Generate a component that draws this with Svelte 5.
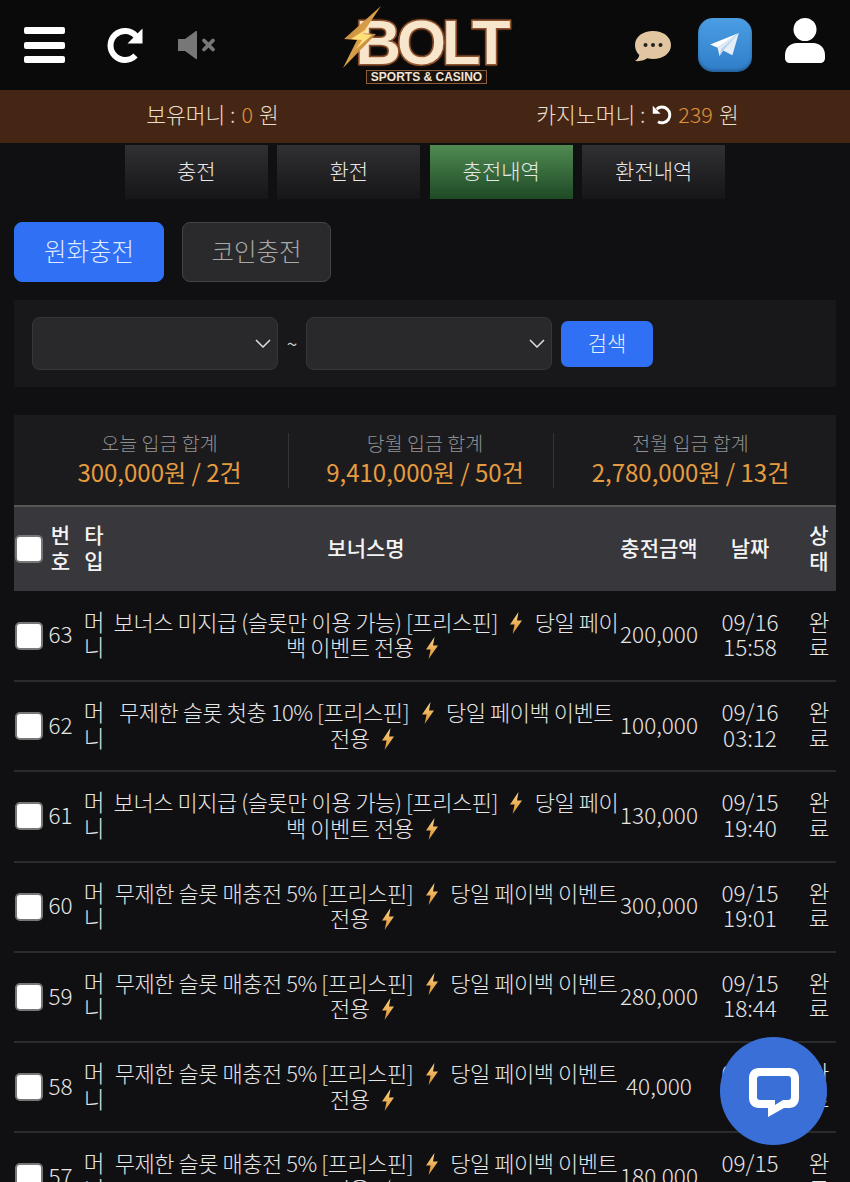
<script lang="ts">
	const tabs = [
		{ label: '충전', active: false },
		{ label: '환전', active: false },
		{ label: '충전내역', active: true },
		{ label: '환전내역', active: false }
	];

	const totals = [
		{ label: '오늘 입금 합계', value: '300,000원 / 2건' },
		{ label: '당월 입금 합계', value: '9,410,000원 / 50건' },
		{ label: '전월 입금 합계', value: '2,780,000원 / 13건' }
	];

	const missing = '보너스 미지급 (슬롯만 이용 가능)';
	const first = '무제한 슬롯 첫충 10%';
	const reload = '무제한 슬롯 매충전 5%';

	const rows = [
		{ no: 63, title: missing, amount: '200,000', day: '09/16', time: '15:58' },
		{ no: 62, title: first, amount: '100,000', day: '09/16', time: '03:12' },
		{ no: 61, title: missing, amount: '130,000', day: '09/15', time: '19:40' },
		{ no: 60, title: reload, amount: '300,000', day: '09/15', time: '19:01' },
		{ no: 59, title: reload, amount: '280,000', day: '09/15', time: '18:44' },
		{ no: 58, title: reload, amount: '40,000', day: '09/15', time: '18:20' },
		{ no: 57, title: reload, amount: '180,000', day: '09/15', time: '08:01' }
	];
</script>

{#snippet bolt()}
	<svg class="bolt" viewBox="0 0 14 22" aria-hidden="true">
		<defs>
			<linearGradient id="bolt-fill" x1="0" y1="0" x2="0" y2="1">
				<stop offset="0" stop-color="#ffd98a" />
				<stop offset="1" stop-color="#d98a2b" />
			</linearGradient>
		</defs>
		<path d="M9.5 0 1 12.5h4.6L3.6 22 13 8.6H8z" fill="url(#bolt-fill)" />
	</svg>
{/snippet}

{#snippet chevron()}
	<svg class="chevron" viewBox="0 0 16 9" aria-hidden="true">
		<path d="m1 1 7 7 7-7" fill="none" stroke="#ddd" stroke-width="1.5" />
	</svg>
{/snippet}

<div class="page">
	<header class="topbar">
		<div class="top-left">
			<button class="icon-btn burger" aria-label="메뉴">
				<span></span><span></span><span></span>
			</button>
			<svg class="refresh" viewBox="0 0 36 36" aria-label="새로고침">
				<path d="M28.5 28.5A14.5 14.5 0 1 1 29 9" fill="none" stroke="#fff" stroke-width="6" />
				<path d="M35.5 1.500v15H20.5z" fill="#fff" />
			</svg>
			<svg class="mute" viewBox="0 0 38 28" aria-label="음소거">
				<path d="M0 8h7l11-8h1v28h-1L7 20H0z" fill="#777" />
				<path d="m26 9.5 9 9m0-9-9 9" stroke="#777" stroke-width="3.8" stroke-linecap="round" />
			</svg>
		</div>

		<div class="logo">
			<svg class="logo-bolt" viewBox="0 0 40 64" aria-hidden="true">
				<defs>
					<linearGradient id="logo-gold" x1="0" y1="0" x2="1" y2="1">
						<stop offset="0" stop-color="#b87a35" />
						<stop offset="0.5" stop-color="#d9a04a" />
						<stop offset="1" stop-color="#8a4f1e" />
					</linearGradient>
				</defs>
				<path d="M38 0 20 27l13 1L0 62l14-28L1 33z" fill="url(#logo-gold)" />
				<path d="M28 20 8 33l11 1-6 9 16-14-9-1z" fill="#ffdf78" />
			</svg>
			<div class="logo-word">BOLT</div>
			<div class="logo-sub">SPORTS &amp; CASINO</div>
		</div>

		<div class="top-right">
			<svg class="chat" viewBox="0 0 36 32" aria-label="채팅">
				<path d="M18 1c10 0 18 5.600 18 14S28 29 18 29c-2 0-4-.2-5.700-.7C10 30 6 31.600 0 31c2.500-1.500 4-3.700 4.300-6C1.500 22.500 0 19 0 15 0 6.600 8 1 18 1z" fill="#e2c5a1" />
				<circle cx="10.500" cy="15" r="2" fill="#222" />
				<circle cx="18" cy="15" r="2" fill="#222" />
				<circle cx="25.500" cy="15" r="2" fill="#222" />
			</svg>
			<div class="telegram">
				<svg viewBox="0 0 32 26" aria-label="텔레그램">
					<path d="M31 0 0 12.500l8 3.500L31 0z" fill="#fff" />
					<path d="M31 0 8 16l2 9 4-6 10 5z" fill="#e4eef8" />
					<path d="M10 25 12 17 31 0 14 19z" fill="#b9d2ea" />
				</svg>
			</div>
			<svg class="user" viewBox="0 0 40 45" aria-label="내 정보">
				<circle cx="20" cy="11.500" r="11.500" fill="#fff" />
				<path d="M0 37c0-7 5-12 12-12h16c7 0 12 5 12 12v3c0 3-2 5-5 5H5c-3 0-5-2-5-5z" fill="#fff" />
			</svg>
		</div>
	</header>

	<div class="balance">
		<div class="balance-item">보유머니 : <b>0</b> 원</div>
		<div class="balance-item">
			카지노머니 :
			<svg class="undo" viewBox="0 0 24 24" aria-hidden="true">
				<path d="M6.500 5.800A9 9 0 1 1 8 20.300" fill="none" stroke="#fff" stroke-width="3.400" />
				<path d="M2 2v9h9z" fill="#fff" />
			</svg>
			<b>239</b> 원
		</div>
	</div>

	<nav class="tabs">
		{#each tabs as tab}
			<a class="tab" class:active={tab.active} href="#top">{tab.label}</a>
		{/each}
	</nav>

	<div class="kinds">
		<button class="kind on">원화충전</button>
		<button class="kind">코인충전</button>
	</div>

	<form class="filter" onsubmit={(e) => e.preventDefault()}>
		<div class="select"><select aria-label="시작일"></select>{@render chevron()}</div>
		<span class="tilde">~</span>
		<div class="select"><select aria-label="종료일"></select>{@render chevron()}</div>
		<button class="search">검색</button>
	</form>

	<section class="totals">
		{#each totals as total}
			<div class="total">
				<div class="total-label">{total.label}</div>
				<div class="total-value">{total.value}</div>
			</div>
		{/each}
	</section>

	<table class="history">
		<colgroup>
			<col class="c-check" />
			<col class="c-no" />
			<col class="c-type" />
			<col class="c-name" />
			<col class="c-amount" />
			<col class="c-date" />
			<col class="c-state" />
		</colgroup>
		<thead>
			<tr>
				<th><input type="checkbox" aria-label="전체 선택" /></th>
				<th>번호</th>
				<th>타입</th>
				<th>보너스명</th>
				<th>충전금액</th>
				<th>날짜</th>
				<th>상태</th>
			</tr>
		</thead>
		<tbody>
			{#each rows as row}
				<tr>
					<td><input type="checkbox" aria-label="선택" /></td>
					<td>{row.no}</td>
					<td>머니</td>
					<td class="name">{row.title} [프리스핀] {@render bolt()} 당일 페이백 이벤트 전용 {@render bolt()}</td>
					<td>{row.amount}</td>
					<td>{row.day}<br />{row.time}</td>
					<td>완료</td>
				</tr>
			{/each}
		</tbody>
	</table>

	<button class="livechat" aria-label="상담">
		<svg viewBox="0 0 52 52" aria-hidden="true">
			<path
				fill-rule="evenodd"
				d="M11 1h30c6 0 10 4 10 10v20c0 6-4 10-10 10H36L20 50v-9h-9C5 41 1 37 1 31V11C1 5 5 1 11 1zm1 8c-2 0-3 1-3 3v18c0 2 1 3 3 3h15v5l8-5h5c2 0 3-1 3-3V12c0-2-1-3-3-3z"
				fill="#fff"
			/>
		</svg>
	</button>
</div>

<style>
	:global(body) {
		background: #101013;
	}

	.page {
		position: relative;
		width: 850px;
		height: 100vh;
		overflow: hidden;
		background: #101013;
		color: #e6e6e6;
		font-family: 'Noto Sans CJK KR', 'Noto Sans', sans-serif;
		font-weight: 300;
	}

	.topbar {
		display: grid;
		grid-template-columns: 1fr auto 1fr;
		align-items: center;
		height: 90px;
		background: #0a0a0a;
	}

	.top-left {
		display: flex;
		align-items: center;
		padding-left: 24px;
	}

	.icon-btn {
		padding: 0;
		border: 0;
		background: none;
	}

	.burger {
		display: flex;
		flex-direction: column;
		gap: 7.5px;
		width: 41px;
	}

	.burger span {
		height: 7px;
		border-radius: 2px;
		background: #fff;
	}

	.refresh {
		width: 36px;
		height: 36px;
		margin-left: 42px;
	}

	.mute {
		width: 38px;
		height: 28px;
		margin-left: 35px;
	}

	.logo {
		position: relative;
		display: flex;
		flex-direction: column;
		align-items: center;
		width: 170px;
		height: 90px;
	}

	.logo-bolt {
		position: absolute;
		top: 6px;
		left: 3px;
		z-index: 1;
		width: 40px;
		height: 64px;
	}

	.logo-word {
		margin: 12px 0 0 12px;
		color: #f7e6cb;
		font-family: 'Liberation Sans', sans-serif;
		font-size: 63px;
		font-weight: 700;
		line-height: 60px;
		letter-spacing: -4px;
		-webkit-text-stroke: 3px #a8623a;
		paint-order: stroke fill;
		text-shadow: 0 0 4px #6d3a1c;
	}

	.logo-sub {
		margin: -2px 0 0 3px;
		padding: 0 4px;
		border: 1px solid #8a5c3c;
		background: #1b120c;
		color: #f0e6d8;
		font-family: 'Liberation Sans', sans-serif;
		font-size: 12px;
		font-weight: 700;
		line-height: 12px;
		white-space: nowrap;
	}

	.top-right {
		display: flex;
		align-items: center;
		justify-content: flex-end;
		padding-right: 25px;
	}

	.chat {
		width: 36px;
		height: 32px;
		margin-top: 2px;
	}

	.telegram {
		display: flex;
		align-items: center;
		justify-content: center;
		width: 54px;
		height: 54px;
		margin-left: 27px;
		border-radius: 15px;
		background: linear-gradient(#4b9ee2, #2f7dc9);
		box-shadow: inset 0 -2px 3px rgba(0, 0, 0, 0.25);
	}

	.telegram svg {
		width: 30px;
		height: 24px;
	}

	.user {
		width: 40px;
		height: 45px;
		margin: 0 0 9px 33px;
	}

	.balance {
		display: flex;
		height: 53px;
		background: #452614;
		color: #eadfce;
		font-size: 21.5px;
	}

	.balance-item {
		display: flex;
		flex: 1;
		align-items: center;
		justify-content: center;
		gap: 6px;
		padding-bottom: 5px;
		line-height: 48px;
	}

	.balance-item b {
		color: #e2933a;
		font-weight: 300;
	}

	.undo {
		width: 21px;
		height: 21px;
	}

	.tabs {
		display: flex;
		justify-content: center;
		gap: 9.5px;
		margin-top: 2px;
	}

	.tab {
		width: 143px;
		height: 54px;
		background: linear-gradient(#303032, #161618);
		color: #e8e8e8;
		font-size: 21px;
		line-height: 50px;
		text-align: center;
		text-decoration: none;
	}

	.tab.active {
		background: linear-gradient(#508a52, #1d4a25);
	}

	.kinds {
		display: flex;
		gap: 18px;
		margin: 23px 0 0 14px;
	}

	.kind {
		width: 149px;
		height: 60px;
		padding: 0 0 4px;
		border: 1px solid #444;
		border-radius: 8px;
		background: #2a2a2c;
		color: #a8a8a8;
		font: inherit;
		font-size: 24.5px;
	}

	.kind.on {
		width: 150px;
		border-color: #2f70f5;
		background: #2f70f5;
		color: #dfe9ff;
	}

	.filter {
		display: flex;
		align-items: center;
		height: 87px;
		margin: 18px 14px 0;
		padding-left: 18px;
		background: #18181b;
	}

	.select {
		position: relative;
		width: 246px;
		height: 53px;
	}

	.select select {
		width: 100%;
		height: 100%;
		border: 1px solid #37373a;
		border-radius: 8px;
		background: #29292c;
		appearance: none;
	}

	.chevron {
		position: absolute;
		top: 22px;
		right: 7px;
		width: 16px;
		height: 9px;
	}

	.tilde {
		width: 28px;
		padding-bottom: 3px;
		color: #c8c8c8;
		font-size: 19px;
		font-weight: 400;
		text-align: center;
	}

	.search {
		width: 92px;
		height: 46px;
		margin-left: 9px;
		padding: 0 0 4px;
		border: 0;
		border-radius: 7px;
		background: #2f70f5;
		color: #e6eeff;
		font: inherit;
		font-size: 21px;
	}

	.totals {
		display: flex;
		height: 90px;
		margin: 28px 14px 0;
		padding: 18px 0 0 17px;
		box-sizing: border-box;
		background: #1b1b1d;
	}

	.total {
		box-sizing: border-box;
		width: 265px;
		height: 55px;
		padding-left: 8px;
		border-left: 1px solid #333335;
		text-align: center;
	}

	.total:first-child {
		width: 257px;
		padding-left: 0;
		border-left: 0;
	}

	.total:last-child {
		flex: 1;
		padding: 0 9px 0 0;
	}

	.total-label {
		margin-top: -2px;
		color: #909093;
		font-size: 19.5px;
		line-height: 24px;
	}

	.total-value {
		margin-top: 2px;
		color: #e59b40;
		font-size: 24px;
		font-weight: 400;
		line-height: 30px;
	}

	.history {
		width: 822px;
		margin-left: 14px;
		border-collapse: collapse;
		table-layout: fixed;
		font-size: 22.5px;
		line-height: 25.5px;
	}

	.c-check {
		width: 31px;
	}

	.c-no {
		width: 31px;
	}

	.c-type {
		width: 36px;
	}

	.c-name {
		width: 508px;
	}

	.c-amount {
		width: 78px;
	}

	.c-date {
		width: 104px;
	}

	.c-state {
		width: 34px;
	}

	.history th {
		box-sizing: border-box;
		height: 85px;
		padding: 0 0 3px;
		border-top: 2px solid #555;
		background: #38373b;
		color: #f4f4f4;
		font-weight: 500;
		font-size: 21px;
	}

	.history th:first-child {
		padding: 0;
	}

	.history td {
		box-sizing: border-box;
		height: 90.2px;
		padding: 0 0 3px;
		border-bottom: 2px solid #2b2b2d;
		text-align: center;
	}

	.history td:first-child {
		padding: 0;
	}

	.history td.name {
		font-size: 22px;
		letter-spacing: -0.45px;
	}

	input[type='checkbox'] {
		display: block;
		width: 28px;
		height: 28px;
		margin: 0 0 0 1px;
		border: 2px solid #777;
		border-radius: 5px;
		background: #fff;
		appearance: none;
	}

	.bolt {
		display: inline-block;
		width: 14px;
		height: 22px;
		margin: 0 7px;
		vertical-align: -3px;
	}

	.livechat {
		position: absolute;
		top: 1037px;
		left: 720px;
		display: flex;
		align-items: center;
		justify-content: center;
		width: 107px;
		height: 108px;
		padding: 0;
		border: 0;
		border-radius: 50%;
		background: #3a6fd8;
	}

	.livechat svg {
		width: 52px;
		height: 52px;
		margin-top: 4px;
	}
</style>
